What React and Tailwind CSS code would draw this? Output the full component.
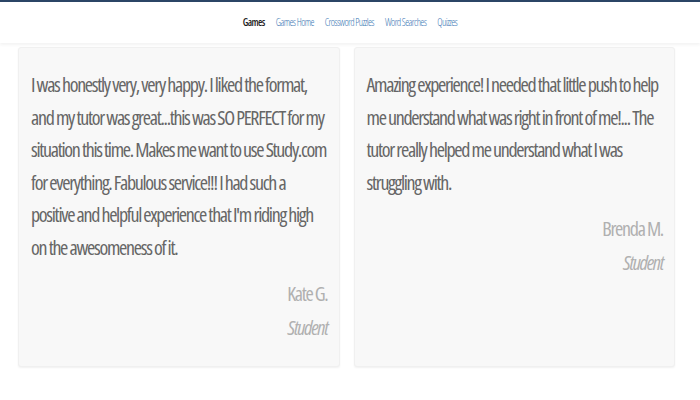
import React from 'react';

const testimonials = [
  {
    text: "I was honestly very, very happy. I liked the format, and my tutor was great...this was SO PERFECT for my situation this time. Makes me want to use Study.com for everything. Fabulous service!!! I had such a positive and helpful experience that I'm riding high on the awesomeness of it.",
    name: 'Kate G.',
    role: 'Student'
  },
  {
    text: 'Amazing experience! I needed that little push to help me understand what was right in front of me!... The tutor really helped me understand what I was struggling with.',
    name: 'Brenda M.',
    role: 'Student'
  }
];

const links = ['Games Home', 'Crossword Puzzles', 'Word Searches', 'Quizzes'];

const App = () => {
  return (
    <div className="w-[700px] h-[400px] bg-white overflow-hidden font-['Open_Sans',sans-serif] font-stretch-75%">
      {/* Top nav */}
      <div className="border-t-2 border-[#2b4566] h-[43px] flex items-center justify-center gap-[11px] shadow-[0_2px_3px_rgba(0,0,0,0.05)] text-[10px] tracking-[-0.6px] font-light">
        <span className="text-[#222] font-semibold">Games</span>
        {links.map((l) => (
          <a key={l} className="text-[#3c78b4]">{l}</a>
        ))}
      </div>

      {/* Testimonials */}
      <div className="grid grid-cols-2 gap-[14px] pl-[18px] pr-[25px] pt-[4px]">
        {testimonials.map((t) => (
          <div
            key={t.name}
            className="h-[320px] bg-[#f8f8f8] rounded-[3px] border border-[#f0f0f0] shadow-[0_1px_2px_rgba(0,0,0,0.06)] pl-[12px] pr-[11px] pt-[21px] tracking-[-1.3px] text-[20px]"
          >
            <p className="text-[#666] leading-[32.5px]">{t.text}</p>
            <p className="text-right text-[#b0b0b0] leading-[34px] mt-[13px]">{t.name}</p>
            <p className="text-right text-[#b0b0b0] leading-[34px] italic">{t.role}</p>
          </div>
        ))}
      </div>
    </div>
  );
};

export default App;
